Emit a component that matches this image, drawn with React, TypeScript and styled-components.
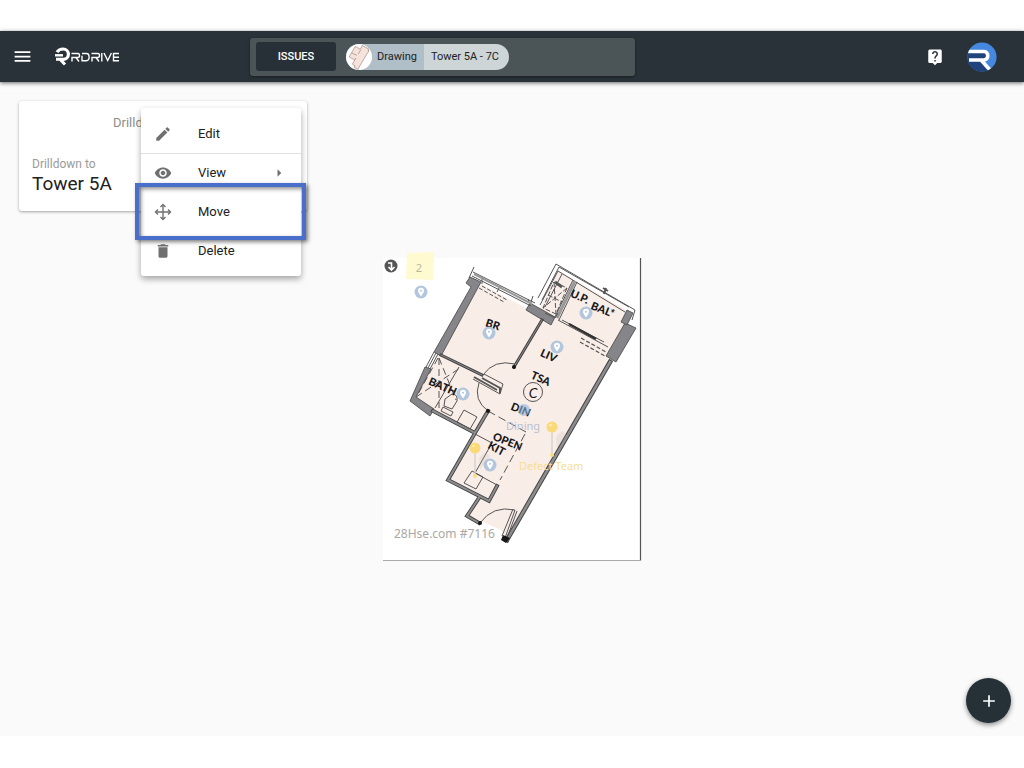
import React from "react";
import styled, { createGlobalStyle } from "styled-components";
import {
  MdAdd,
  MdArrowRight,
  MdDelete,
  MdEdit,
  MdLiveHelp,
  MdMenu,
  MdVisibility,
} from "react-icons/md";

const Global = createGlobalStyle`
  * { box-sizing: border-box; }
  body { margin: 0; background: #fff; color: #212121; font-family: Roboto, sans-serif; }
  button { font: inherit; border: 0; cursor: pointer; }
`;

const Page = styled.div`
  display: flex;
  flex-direction: column;
  min-height: 100vh;
  padding: 31px 0 32px;
`;

const Header = styled.header`
  display: grid;
  grid-template-columns: 238px minmax(0, 385px) 1fr;
  align-items: center;
  height: 51px;
  padding: 0 27px 0 12px;
  background: #283238;
  box-shadow: 0 1px 4px rgba(0, 0, 0, 0.6);
  z-index: 1;
`;

const HeaderSide = styled.div<{ $end?: boolean }>`
  display: flex;
  align-items: center;
  gap: ${(p) => (p.$end ? 23 : 21)}px;
  justify-content: ${(p) => (p.$end ? "flex-end" : "flex-start")};
`;

const IconButton = styled.button`
  display: flex;
  padding: 0;
  background: none;
  color: #fff;
`;

const Brand = styled.a`
  display: flex;
`;

const SearchBar = styled.div`
  display: flex;
  align-items: center;
  gap: 10px;
  height: 38px;
  padding: 0 6px;
  border-radius: 3px;
  background: #4b5557;
  box-shadow: 0 1px 3px rgba(0, 0, 0, 0.4);
`;

const IssuesButton = styled.button`
  width: 80px;
  height: 29px;
  padding: 0;
  border-radius: 3px;
  background: #273037;
  color: #fff;
  font-size: 11px;
  font-weight: 500;
`;

const Chip = styled.div`
  display: flex;
  align-items: center;
  height: 26px;
  border-radius: 13px;
  overflow: hidden;
  background: #cdd5d7;
  font-size: 11px;
  line-height: 26px;
`;

const ChipKind = styled.span`
  display: flex;
  gap: 5px;
  padding-right: 7px;
  background: #b0bec7;
`;

const ChipName = styled.span`
  padding: 0 10px 0 7px;
`;

const Main = styled.main`
  display: grid;
  flex: 1;
  background: #fafafa;

  & > * {
    grid-area: 1 / 1;
  }
`;

const Card = styled.section`
  position: relative;
  z-index: 1;
  place-self: start;
  width: 288px;
  margin: 19px;
  padding: 14px 13px;
  border-radius: 3px;
  background: #fff;
  box-shadow: 0 1px 3px rgba(0, 0, 0, 0.35);
`;

const CardTitle = styled.h2`
  margin: 0 0 26px;
  padding-left: 81px;
  color: #8d8d8d;
  font-size: 13px;
  font-weight: 400;
  line-height: 16px;
`;

const CardLabel = styled.div`
  color: #9a9a9a;
  font-size: 12px;
  line-height: 14px;
`;

const CardValue = styled.div`
  font-size: 19px;
  line-height: 26px;
`;

const Menu = styled.ul`
  position: absolute;
  top: 7px;
  left: 122px;
  width: 160px;
  margin: 0;
  padding: 6px 0;
  border-radius: 3px;
  background: #fff;
  box-shadow: 0 3px 6px rgba(0, 0, 0, 0.35);
  list-style: none;
`;

const MenuItem = styled.li<{ $divided?: boolean; $highlighted?: boolean }>`
  position: relative;
  box-shadow: ${(p) => (p.$divided ? "0 1px 0 #e0e0e0" : "none")};
  z-index: ${(p) => (p.$highlighted ? 1 : 0)};

  &::after {
    content: "";
    display: ${(p) => (p.$highlighted ? "block" : "none")};
    position: absolute;
    inset: -9px -5px -9px -6px;
    border: 4px solid #4a6fcb;
    box-shadow: 2px 2px 4px rgba(0, 0, 0, 0.5), inset 2px 2px 4px rgba(0, 0, 0, 0.45);
    pointer-events: none;
  }
`;

const MenuButton = styled.button`
  display: grid;
  grid-template-columns: 18px 1fr 16px;
  column-gap: 26px;
  align-items: center;
  width: 100%;
  height: 39px;
  padding: 0 15px 0 13px;
  background: none;
  color: #212121;
  font-size: 13px;
  text-align: left;

  & svg {
    color: #707070;
  }
`;

const Plan = styled.svg`
  place-self: center;
  overflow: visible;
`;

const Fab = styled.button`
  display: grid;
  place-items: center;
  place-self: end;
  width: 45px;
  height: 45px;
  margin: 13px;
  padding: 0;
  border-radius: 50%;
  background: #263137;
  color: #fff;
  box-shadow: 0 2px 5px rgba(0, 0, 0, 0.45);
`;

const Logo = () => (
  <svg width="66" height="20" viewBox="0 0 66 20" role="img" aria-label="RDRIVE">
    <g fill="none" stroke="#fff" strokeWidth="3.2">
      <path d="M3 5.2C5 2 8 2 9.200 2a4.900 4.900 0 0 1 0 10.400H6.500" />
      <path d="M1 8.300h8" strokeWidth="2.400" />
      <path d="M2 12.200h4l5 5.300" strokeWidth="3" />
    </g>
    <g fill="none" stroke="#fff" strokeWidth="1.400">
      <path d="M18 14.500v-4h6c2 0 2-4 0-4h-6.500M22 10.500l3 4" />
      <path d="M28 6.500h4.500c3.500 0 3.500 7.300 0 7.300H28v-5" />
      <path d="M38 14.500v-4h6c2 0 2-4 0-4h-6.500M42 10.500l3 4" />
      <path d="M47.800 6v8.500M50 6l3.700 7.500L57.400 6" />
      <path d="M65 6.500h-5.500v7.300H65M59.500 10.200H65" />
    </g>
  </svg>
);

const Avatar = () => (
  <svg width="30" height="30" viewBox="0 0 30 30" role="img" aria-label="Account">
    <clipPath id="avatar-clip">
      <circle cx="15" cy="15" r="14.600" />
    </clipPath>
    <g clipPath="url(#avatar-clip)">
      <path fill="#4489df" d="M0 0h30v30H0z" />
      <path fill="#20437e" d="M0 11h18q4 0 4 3t-4 3H12l12 13H0z" />
      <path d="M0 9.500h17c5 0 5 8.500 0 8.500H2M14 18l9 10" fill="none" stroke="#fff" strokeWidth="3.600" />
    </g>
  </svg>
);

const MoveIcon = () => (
  <svg width="18" height="18" viewBox="0 0 18 18" fill="none" stroke="currentColor" strokeWidth="1.400" aria-hidden="true">
    <path d="M9 2v14M2 9h14" />
    <path d="M6.500 4 9 1.500 11.500 4M6.500 14 9 16.500l2.500-2.500M4 6.500 1.500 9 4 11.500M14 6.500 16.500 9 14 11.500" />
  </svg>
);

const ROOMS =
  "M479 283 537 314 558 271 630 312 622 328 634 330 612 362 508 539 501 530 483 522 469 515 479 498 449 480 475 433 414 399Z";

const ChipThumb = () => (
  <svg width="26" height="26" viewBox="0 0 26 26" aria-hidden="true">
    <circle cx="13" cy="13" r="13" fill="#fff" />
    <g transform="translate(-34 -23) scale(0.09)" stroke="#9c7d74" strokeWidth="7" fill="#f6e3dc">
      <path d={ROOMS} />
      <path d="M441 355 500 382M475 433 488 410M542 320 514 367" fill="none" />
    </g>
  </svg>
);

const Pin = ({ x, y }: { x: number; y: number }) => (
  <g transform={`translate(${x} ${y})`}>
    <circle r="6.500" fill="#b2c6dd" />
    <path d="M0 4.500C-2 1.500-3-.2-3-1.300a3 3 0 0 1 6 0C3-.2 2 1.500 0 4.500Z" fill="#fff" />
    <circle cy="-1.200" r="1" fill="#b2c6dd" />
  </g>
);

const PushPin = ({ x, y }: { x: number; y: number }) => (
  <g transform={`translate(${x} ${y})`}>
    <path d="M4 10 10 4l5 4-10 13Z" fill="#bfb3ad" opacity=".2" />
    <path d="M0 4v24" stroke="#d8d2ce" strokeWidth="1.500" />
    <circle r="5.500" fill="#fad978" />
    <circle cx="-1.500" cy="-2" r="1.200" fill="#fff0bd" />
    <circle cy="28" r="2" fill="#fbdd83" />
  </g>
);

const roomLabels = [
  { text: "BR", x: 493, y: 324, turn: 18 },
  { text: "U.P.", x: 580, y: 296, turn: 24 },
  { text: "BAL*", x: 603, y: 309, turn: 22 },
  { text: "LIV", x: 549, y: 355, turn: 24 },
  { text: "TSA", x: 541, y: 378, turn: 24 },
  { text: "BATH", x: 443, y: 386, turn: 24 },
  { text: "DIN", x: 521, y: 409, turn: 22 },
  { text: "OPEN", x: 508, y: 441, turn: 22 },
  { text: "KIT", x: 497, y: 448, turn: 28 },
];

const pins = [
  [421, 292], [489, 333], [586, 313], [557, 347], [463, 394], [490, 465],
];

const FloorPlan = () => (
  <Plan width="258" height="303" viewBox="383 258 258 303" role="img" aria-label="Floor plan of Tower 5A - 7C">
    <path d="M383 258h258v303H383z" fill="#fff" />
    <path d="M640.500 258v303" stroke="#555" strokeWidth="1.200" />
    <path d="M383 560.500h258" stroke="#aaa" />
    <path d={ROOMS} fill="#f9ede8" />

    <g fill="#86868a" stroke="#444" strokeWidth=".8">
      <path d="M466 283 470 277 481 282 441 356 434 352 471 287Z" />
      <path d="M425 367 431 369 416 397 434 409 430 416 410 401Z" />
      <path d="M530 303 555 317 551 325 526 310Z" />
      <path d="M625 323 636 328 616 362 606 356Z" />
      <path d="M627 310 633 313 627 325 621 322Z" />
    </g>

    <g fill="none" strokeLinecap="square">
      <g stroke="#444" strokeWidth="3.800">
        <path d="M433 411 475 433 488 411M475 433 448 480 489 501 497 486M479 498 467 516 479 523" />
        <path d="M610 362 507 540" strokeWidth="4.600" />
        <path d="M542 320 514 367M441 355 482 375" strokeWidth="3" />
      </g>
      <g stroke="#8c8c8e" strokeWidth="2">
        <path d="M433 411 475 433 488 411M475 433 448 480 489 501 497 486M479 498 467 516 479 523" />
        <path d="M610 362 507 540" strokeWidth="2.600" />
        <path d="M542 320 514 367M441 355 482 375" strokeWidth="1" />
      </g>
    </g>

    <g fill="none" stroke="#555" strokeWidth="1">
      <path d="M474 267 469 278M473 272 535 303M472 276 531 306M482 277v7M500 286l-3 6M528 299l2 6 3-9" />
      <path d="M474 274 532 304" stroke="#999" strokeWidth="2" />
      <path d="M482 286 507 300M479 288 504 302" strokeDasharray="4 2" />
      <path d="M434 352 426 367M438 354 430 369M436 353l-8 15" />
      <path d="M538 298 556 264 635 310 632 320M542 300 559 267 629 307M540 305 558 271 625 312M545 307 562 274" />
      <path d="M577 282 559 320M573 280 555 317" />
      <path d="M575 281 557 318" stroke="#999" strokeWidth="3" />
      <path d="M606 288l-2 6M603 288l5 3" strokeWidth="2" />
      <path d="M554 282 567 288 556 314 543 308Z" strokeDasharray="5 2" />
      <path d="M554 282l2 32M567 288l-24 20M548 295l14 7" strokeDasharray="5 2" />
      <path d="M555 282l7 5" strokeWidth="3" />
      <path d="M545 313l10 5 3-5M558 320 608 347M562 320l42 22" />
      <path d="M569 324l27 15" stroke="#333" strokeWidth="2.500" />
      <path d="M581 338 606 352M580 342l25 14" strokeDasharray="4 2" strokeWidth="1.200" />
      <path d="M483 375Q494 359 515 364M479 383Q473 400 488 411M484 374 503 384 500 394 473 379" />
      <path d="M482 378 500 388v5M474 377l23 13" strokeWidth="2" />
      <path d="M459 367 435 408" />
      <path d="M439 358v50M416 397l44-29M438 358 417 396M439 358 456 400" strokeDasharray="7 4" />
      <path d="M445 399l7-5q6 0 5 7l-5 8-8-3ZM443 407l10 5-2 4-10-5ZM464 410l13 7-7 12-13-7Z" />
      <path d="M488 411 526 432M525 434 500 480" strokeDasharray="8 4" />
      <path d="M475 434 492 443 475 473 497 485M472 471l11 6-7 12-12-6Z" />
      <path d="M480 523Q493 505 515 510M513 509 502 536M517 511 507 538M515 510l-10 28" />
      <circle cx="533" cy="392" r="9.500" />
    </g>
    <g fill="#171717">
      <circle cx="514" cy="367" r="2" />
      <circle cx="488" cy="411" r="2" />
      <circle cx="480" cy="523" r="2" />
      <path d="M503 535l7 3-4 5-5-3Z" />
    </g>

    <g fontFamily="Lato, sans-serif" fontSize="11" fontWeight="900" fill="#171717" textAnchor="middle" dominantBaseline="central">
      {roomLabels.map((r) => (
        <text key={r.text} transform={`translate(${r.x} ${r.y}) rotate(${r.turn})`}>
          {r.text}
        </text>
      ))}
      <text x="533" y="392" fontSize="14" fontStyle="italic" fontWeight="400">C</text>
    </g>
    <circle cx="524" cy="410" r="6" fill="#8fb4dc" opacity=".6" />

    {pins.map(([x, y]) => (
      <Pin key={`${x}-${y}`} x={x} y={y} />
    ))}
    <PushPin x={552} y={427} />
    <PushPin x={475} y={448} />

    <g fontFamily="'Noto Sans', sans-serif">
      <text x="506" y="430" fontSize="11" fill="#b8c1d0">Dining</text>
      <text x="519" y="470" fontSize="11" fill="#f8de94">Defect Team</text>
      <text x="394" y="538" fontSize="12" fill="#aaa7a5">28Hse.com #7116</text>
    </g>

    <path d="M407 253l27-1-1 28-27-1Z" fill="#fffad0" />
    <text x="419" y="272" fontFamily="'Noto Sans', sans-serif" fontSize="11" fill="#b9b7a0" textAnchor="middle">2</text>
    <circle cx="391" cy="266" r="6.500" fill="#555" />
    <path d="M388 263h3.500v6M388.500 267l3 3 3-3" fill="none" stroke="#fff" strokeWidth="1.600" />
  </Plan>
);

const menuItems = [
  { label: "Edit", icon: <MdEdit size={18} />, divided: true },
  { label: "View", icon: <MdVisibility size={18} />, submenu: true },
  { label: "Move", icon: <MoveIcon />, highlighted: true },
  { label: "Delete", icon: <MdDelete size={18} /> },
];

export default function App() {
  return (
    <Page>
      <Global />
      <Header>
        <HeaderSide>
          <IconButton aria-label="Menu"><MdMenu size={21} /></IconButton>
          <Brand href="#"><Logo /></Brand>
        </HeaderSide>
        <SearchBar>
          <IssuesButton>ISSUES</IssuesButton>
          <Chip>
            <ChipKind><ChipThumb />Drawing</ChipKind>
            <ChipName>Tower 5A - 7C</ChipName>
          </Chip>
        </SearchBar>
        <HeaderSide $end>
          <IconButton aria-label="Help"><MdLiveHelp size={18} /></IconButton>
          <IconButton aria-label="Account"><Avatar /></IconButton>
        </HeaderSide>
      </Header>
      <Main>
        <FloorPlan />
        <Card>
          <CardTitle>Drilldown</CardTitle>
          <CardLabel>Drilldown to</CardLabel>
          <CardValue>Tower 5A</CardValue>
          <Menu>
            {menuItems.map((item) => (
              <MenuItem key={item.label} $divided={item.divided} $highlighted={item.highlighted}>
                <MenuButton>
                  {item.icon}
                  <span>{item.label}</span>
                  {item.submenu && <MdArrowRight size={18} />}
                </MenuButton>
              </MenuItem>
            ))}
          </Menu>
        </Card>
        <Fab aria-label="Add"><MdAdd size={20} /></Fab>
      </Main>
    </Page>
  );
}
